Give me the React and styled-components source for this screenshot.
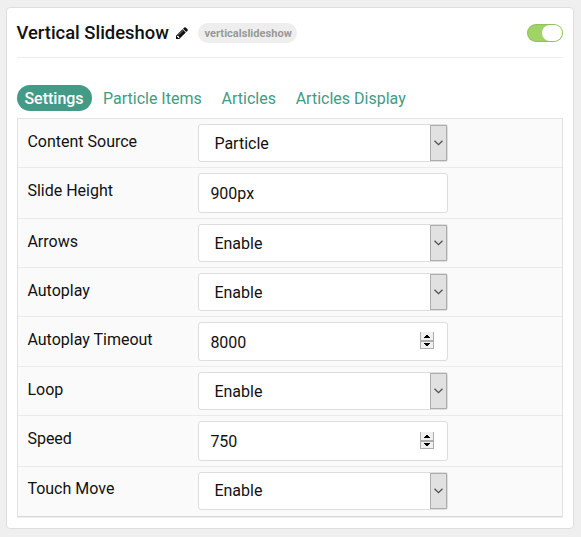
import React from "react";
import styled, { createGlobalStyle } from "styled-components";

const GlobalStyle = createGlobalStyle`
  * { box-sizing: border-box; }
  body {
    margin: 0;
    background: #efefef;
    color: #111;
    font-family: Roboto, "Liberation Sans", sans-serif;
    font-size: 16px;
  }
`;

const Page = styled.main`
  height: 537px;
  padding: 7px 7px 0 6px;
  overflow: hidden;
`;

const Card = styled.section`
  height: 522px;
  padding: 0 10px;
  background: #fff;
  border: 1px solid #ddd;
  border-radius: 4px;
`;

const Header = styled.header`
  display: flex;
  align-items: center;
  height: 50px;
  border-bottom: 1px solid #eee;
`;

const Title = styled.h4`
  margin: 0;
  width: 152px;
  font-size: 18.4px;
  font-weight: 500;
  line-height: 24px;
  text-indent: -0.5px;
  white-space: nowrap;
`;

const PencilIcon = styled.svg`
  width: 12px;
  height: 12px;
  margin: 1px 0 0 7px;
  fill: #111;
`;

const Badge = styled.span`
  height: 20px;
  margin-left: 10px;
  padding: 1px 0 0 6.5px;
  width: 99px;
  border-radius: 10px;
  background: #eee;
  color: #999;
  font-size: 11.1px;
  font-weight: 700;
  line-height: 20px;
  white-space: nowrap;
`;

const Toggle = styled.span`
  display: flex;
  justify-content: flex-end;
  width: 36px;
  height: 18px;
  margin-left: auto;
  padding: 1px;
  border-radius: 9px;
  background: #a0d468;
  box-shadow: inset 0 0 1px 1px rgba(90, 140, 40, 0.25);
`;

const Knob = styled.span`
  width: 20px;
  height: 16px;
  border-radius: 8px;
  background: #fff;
`;

const Tabs = styled.nav`
  display: flex;
  align-items: center;
  height: 26px;
  margin-top: 27px;
`;

const Tab = styled.a`
  height: 26px;
  margin-right: 4px;
  padding: 0 8px 0 7.4px;
  border-radius: 13px;
  background: ${(p) => (p.$active ? "#439a86" : "transparent")};
  color: ${(p) => (p.$active ? "#fff" : "#439a86")};
  font-weight: ${(p) => (p.$active ? 500 : 400)};
  line-height: 27px;
  white-space: nowrap;
  & + & { margin-right: 4.4px; }
`;

const Panel = styled.div`
  margin-top: 7px;
  background: #fafafa;
  border: 1px solid #e3e3e3;
  border-bottom: 1px solid #d9d9d9;
  box-shadow: 0 1px 0 #eee;
`;

const Row = styled.div`
  display: flex;
  align-items: flex-start;
  height: ${(p) => p.$height}px;
  padding: 5px 0 0 9.4px;
  border-bottom: 1px solid #ebebeb;
  &:last-child { border-bottom: 0; }
`;

const Label = styled.label`
  width: 170.6px;
  padding-top: ${(p) => (p.$raised ? 4 : 5)}px;
  line-height: 26px;
`;

const Field = styled.div`
  display: flex;
  justify-content: space-between;
  width: 250px;
  height: ${(p) => p.$height}px;
  padding-left: ${(p) => (p.$inset ? 15.4 : 11.4)}px;
  background: #fff;
  border: 1px solid #ddd;
  border-radius: 3px;
  line-height: ${(p) => p.$line || p.$height}px;
`;

const DropButton = styled.span`
  display: flex;
  align-items: center;
  justify-content: center;
  width: 17px;
  background: #e1e1e1;
  border: 1px solid #adadad;
`;

const Chevron = styled.svg`
  width: 9px;
  height: 6px;
  fill: none;
  stroke: #505050;
  stroke-width: 1.3;
`;

const Spinner = styled.span`
  display: grid;
  grid-template-rows: 8px 8px;
  width: 14px;
  height: 17px;
  margin: ${(p) => p.$top}px 13px 0 0;
  border: 1px solid #adadad;
  border-top: 0;
  background: #f0f0f0;
  svg {
    display: block;
    width: 12px;
    height: 8px;
  }
  svg + svg { border-top: 2px solid #adadad; }
`;

const rows = [
  { label: "Content Source", type: "select", value: "Particle", height: 49 },
  { label: "Slide Height", type: "text", value: "900px", height: 51, field: 40 },
  { label: "Arrows", type: "select", value: "Enable", height: 49 },
  { label: "Autoplay", type: "select", value: "Enable", height: 49 },
  { label: "Autoplay Timeout", type: "number", value: "8000", height: 50, field: 39 },
  { label: "Loop", type: "select", value: "Enable", height: 49 },
  { label: "Speed", type: "number", value: "750", height: 51, field: 40 },
  { label: "Touch Move", type: "select", value: "Enable", height: 49, raised: true, line: 36 },
];

function SelectArrow() {
  return (
    <DropButton>
      <Chevron viewBox="0 0 9 6"><path d="M.5 .8 4.5 4.7 8.5 .8" /></Chevron>
    </DropButton>
  );
}

function NumberSpinner({ top }) {
  return (
    <Spinner $top={top}>
      <svg viewBox="0 0 12 8" shapeRendering="crispEdges"><path d="M5 3h2v1h1v1h1v1H3V5h1V4h1z" /></svg>
      <svg viewBox="0 0 12 6" shapeRendering="crispEdges"><path d="M3 1h6v1H8v1H7v1H5V3H4V2H3z" /></svg>
    </Spinner>
  );
}

export default function App() {
  return (
    <Page>
      <GlobalStyle />
      <Card>
        <Header>
          <Title>Vertical Slideshow</Title>
          <PencilIcon viewBox="0 0 1536 1536">
            <path d="M363 1408l91-91-235-235-91 91v107h128v128zM886 480q0-22-22-22-10 0-17 7l-542 542q-7 7-7 17 0 22 22 22 10 0 17-7l542-542q7-7 7-17zM832 288l416 416-832 832H0v-416zM1515 384q0 53-37 90l-166 166-416-416 166-165q36-38 90-38 53 0 91 38l235 234q37 39 37 91z" />
          </PencilIcon>
          <Badge>verticalslideshow</Badge>
          <Toggle><Knob /></Toggle>
        </Header>
        <Tabs>
          <Tab $active>Settings</Tab>
          <Tab>Particle Items</Tab>
          <Tab>Articles</Tab>
          <Tab>Articles Display</Tab>
        </Tabs>
        <Panel>
          {rows.map((row) => (
            <Row key={row.label} $height={row.height}>
              <Label $raised={row.raised}>{row.label}</Label>
              <Field $height={row.field || 38} $line={row.line} $inset={row.type === "select"}>
                {row.value}
                {row.type === "select" && <SelectArrow />}
                {row.type === "number" && <NumberSpinner top={row.field - 30} />}
              </Field>
            </Row>
          ))}
        </Panel>
      </Card>
    </Page>
  );
}
